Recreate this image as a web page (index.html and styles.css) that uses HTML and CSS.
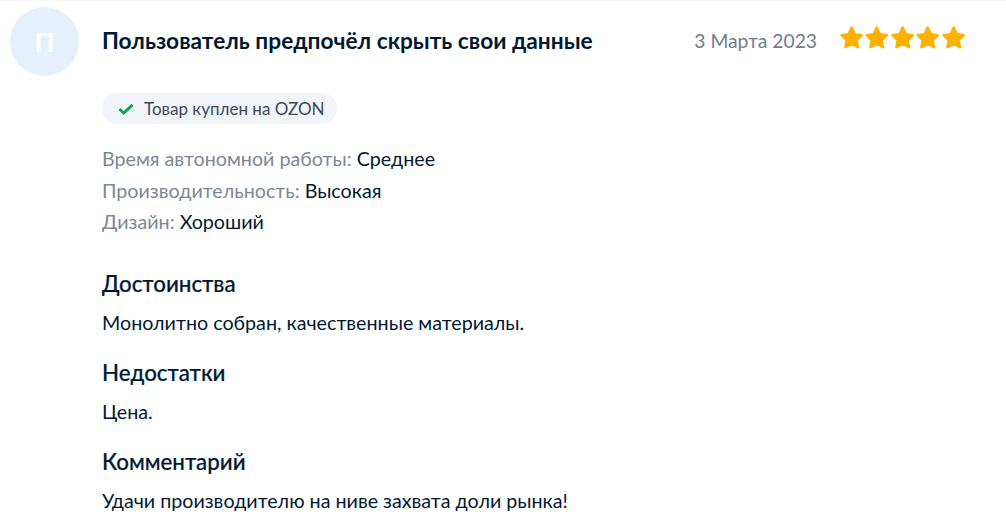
FILE: index.html
```html
<!DOCTYPE html>
<html lang="ru">
<head>
    <meta charset="UTF-8">
    <meta name="viewport" content="width=device-width, initial-scale=1.0">
    <title>Отзыв</title>
    <link rel="stylesheet" href="styles.css">
</head>
<body>
    <div class="review">
        <div class="review-head">
            <div class="avatar">П</div>
            <div class="author">Пользователь предпочёл скрыть свои данные</div>
            <div class="date">3 Марта 2023</div>
            <div class="stars">
                <svg class="star" viewBox="0 0 24 24"><path d="M12 2.5l2.9 6.2 6.6.9-4.8 4.7 1.2 6.7-5.9-3.3-5.9 3.3 1.2-6.7-4.8-4.7 6.6-.9z"/></svg>
                <svg class="star" viewBox="0 0 24 24"><path d="M12 2.5l2.9 6.2 6.6.9-4.8 4.7 1.2 6.7-5.9-3.3-5.9 3.3 1.2-6.7-4.8-4.7 6.6-.9z"/></svg>
                <svg class="star" viewBox="0 0 24 24"><path d="M12 2.5l2.9 6.2 6.6.9-4.8 4.7 1.2 6.7-5.9-3.3-5.9 3.3 1.2-6.7-4.8-4.7 6.6-.9z"/></svg>
                <svg class="star" viewBox="0 0 24 24"><path d="M12 2.5l2.9 6.2 6.6.9-4.8 4.7 1.2 6.7-5.9-3.3-5.9 3.3 1.2-6.7-4.8-4.7 6.6-.9z"/></svg>
                <svg class="star" viewBox="0 0 24 24"><path d="M12 2.5l2.9 6.2 6.6.9-4.8 4.7 1.2 6.7-5.9-3.3-5.9 3.3 1.2-6.7-4.8-4.7 6.6-.9z"/></svg>
            </div>
        </div>
        <div class="review-body">
            <div class="badge">
                <svg class="check" viewBox="0 0 16 12"><path d="M1.5 6l4.2 4L14.5 1.8"/></svg>
                Товар куплен на OZON
            </div>
            <div class="props">
                <div class="prop"><span class="prop-name">Время автономной работы:</span> Среднее</div>
                <div class="prop"><span class="prop-name">Производительность:</span> Высокая</div>
                <div class="prop"><span class="prop-name">Дизайн:</span> Хороший</div>
            </div>
            <h4>Достоинства</h4>
            <p>Монолитно собран, качественные материалы.</p>
            <h4>Недостатки</h4>
            <p>Цена.</p>
            <h4>Комментарий</h4>
            <p>Удачи производителю на ниве захвата доли рынка!</p>
        </div>
    </div>
</body>
</html>
```

FILE: styles.css
```css
html, body {
    height: 512px;
    overflow: hidden;
}
body {
    font-family: "Lato", "Noto Sans", sans-serif;
    background-color: #fff;
    color: #001a34;
    margin: 0;
    padding: 0;
}
.review {
    padding: 7px 40px 0 10px;
    box-shadow: inset 0 1px 0 #f7f7f7;
}
.review-head {
    display: flex;
    align-items: center;
    height: 69px;
}
.avatar {
    width: 69px;
    height: 69px;
    flex: none;
    border-radius: 50%;
    background-color: #e6effc;
    color: #fff;
    font-size: 27px;
    font-weight: 700;
    display: flex;
    align-items: center;
    justify-content: center;
    margin-right: 23px;
}
.author {
    flex: 1;
    font-size: 22.7px;
    font-weight: 700;
    padding-bottom: 2px;
}
.date {
    color: #6f7d8c;
    font-size: 19.3px;
    margin-right: 22px;
    padding-bottom: 2px;
}
.stars {
    display: flex;
    padding-bottom: 7px;
}
.star {
    width: 25.4px;
    height: 25.4px;
    fill: #ffb000;
    stroke: #ffb000;
    stroke-width: 2.4;
    stroke-linejoin: round;
}
.review-body {
    padding-left: 92px;
}
.badge {
    display: inline-flex;
    align-items: center;
    gap: 10px;
    height: 31px;
    margin-top: 17px;
    padding: 0 12px 0 16px;
    border-radius: 16px;
    background-color: #f1f4f9;
    color: #3b4a5c;
    font-size: 17px;
}
.check {
    width: 16px;
    height: 12px;
    fill: none;
    stroke: #10a64a;
    stroke-width: 3;
}
.props {
    margin-top: 19px;
    font-size: 19.7px;
}
.prop {
    line-height: 31.7px;
}
.prop-name {
    color: #7b8896;
}
h4 {
    font-size: 22.3px;
    font-weight: 500;
    line-height: 28px;
    margin: 0;
    -webkit-text-stroke: 0.2px #001a34;
}
.props + h4 {
    margin-top: 32px;
}
p {
    font-size: 19.7px;
    line-height: 20px;
    margin: 15px 0 26px;
}
p:last-child {
    margin-bottom: 0;
}
```
